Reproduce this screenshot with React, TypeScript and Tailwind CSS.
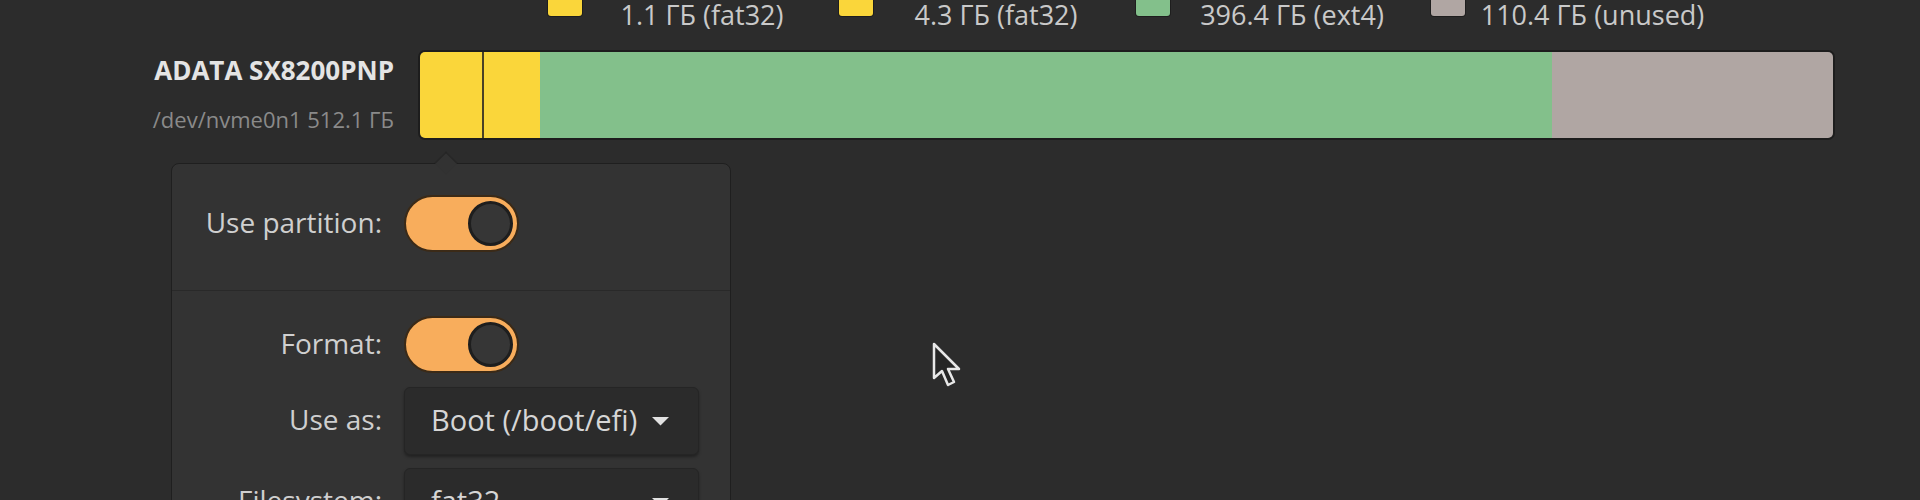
import React from "react";

type LegendItem = {
  color: string;
  size: string;
  width: string;
};

// the partition names sit above the top edge of the view; only the sizes show
const legend: LegendItem[] = [
  { color: "bg-[#fad63a]", size: "1.1 ГБ (fat32)", width: "w-[210px]" },
  { color: "bg-[#fad63a]", size: "4.3 ГБ (fat32)", width: "w-[216px]" },
  { color: "bg-[#83c08b]", size: "396.4 ГБ (ext4)", width: "w-[214px]" },
  { color: "bg-[#b0a6a3]", size: "110.4 ГБ (unused)", width: "w-[225px]" },
];

function Toggle() {
  return (
    <div className="flex h-[57px] w-[115px] items-center justify-end rounded-full border-2 border-[#3b2a17] bg-[#f8ad5c] pr-[4px]">
      <div className="h-[45px] w-[45px] rounded-full border-[3px] border-[#1e1e1e] bg-[#363636]" />
    </div>
  );
}

function Select({ value }: { value: string }) {
  return (
    <div className="flex h-[68px] w-[295px] items-center justify-between rounded-[6px] border border-[#252525] bg-[#2b2b2b] pl-[26px] pr-[28px] shadow-[0_2px_3px_rgba(0,0,0,0.35)]">
      <span className="whitespace-nowrap pb-[3px] text-[29px] leading-none text-[#d6d6d6]">{value}</span>
      <svg width="19" height="10" viewBox="0 0 19 10">
        <path d="M1 1 L18 1 L9.5 9.5 Z" fill="#e2e2e2" />
      </svg>
    </div>
  );
}

function Row({ label, children, className = "" }: { label: string; children: React.ReactNode; className?: string }) {
  return (
    <div className={`flex items-center pl-[31px] ${className}`}>
      <div className="w-[179px] whitespace-nowrap pb-[4px] text-right text-[28px] leading-none text-[#cfcfcf]">{label}</div>
      <div className="ml-[22px]">{children}</div>
    </div>
  );
}

function Cursor() {
  return (
    <svg
      className="absolute left-[932px] top-[342px]"
      width="30"
      height="46"
      viewBox="0 0 30 46"
    >
      <path
        d="M2 2 L2 36 L10 29 L16 43 L22 40 L16 27 L27 27 Z"
        fill="#262626"
        stroke="#e8e8e8"
        strokeWidth="2.5"
        strokeLinejoin="round"
      />
    </svg>
  );
}

export default function App() {
  return (
    <div className="relative h-[500px] w-full overflow-hidden bg-[#2c2c2c] font-['Open_Sans',sans-serif]">
      {/* legend, scrolled so the partition names sit above the top edge */}
      <div className="-mt-[31px] ml-[420px] mr-[87px] flex justify-center gap-x-8">
        {legend.map((item) => (
          <div key={item.size} className="flex items-center gap-[15px]">
            <div className={`h-[34px] w-[34px] rounded-[3px] shadow-[0_0_0_1px_#1e1e1e] ${item.color}`} />
            <div className={`${item.width} whitespace-nowrap text-center text-[27px] leading-[27px] text-[#c9c9c9]`}>
              <div className="h-[32px]" />
              <div>{item.size}</div>
            </div>
          </div>
        ))}
      </div>

      {/* disk */}
      <div className="mt-[24px] flex items-center pl-[140px] pr-[87px]">
        <div className="w-[254px] text-right">
          <div className="whitespace-nowrap text-[26px] font-bold leading-[32px] text-[#e4e4e4]">ADATA SX8200PNP</div>
          <div className="mt-[16px] whitespace-nowrap text-[22px] leading-[34px] text-[#8a8a8a]">/dev/nvme0n1 512.1 ГБ</div>
        </div>
        <div className="ml-[26px] flex h-[86px] flex-1 overflow-hidden rounded-[5px] shadow-[0_0_0_2px_#1d1d1d]">
          <div className="w-[62px] bg-[#fad63a]" />
          <div className="w-[58px] border-l-2 border-[#4a4125] bg-[#fad63a]" />
          <div className="flex-1 bg-[#83c08b]" />
          <div className="w-[281px] bg-[#b0a6a3]" />
        </div>
      </div>

      {/* partition popover */}
      <div className="relative ml-[171px] mt-[25px] w-[560px] rounded-t-[8px] border border-[#1f1f1f] bg-[#333333]">
        <div className="absolute -top-[9px] left-[266px] h-4 w-4 rotate-45 border-l border-t border-[#242424] bg-[#323232]" />
        <div className="pb-[38px] pt-[31px]">
          <Row label="Use partition:">
            <Toggle />
          </Row>
        </div>
        <div className="h-px bg-[#292929]" />
        <div className="flex flex-col pt-[25px]">
          <Row label="Format:">
            <Toggle />
          </Row>
          <Row label="Use as:" className="mt-[14px]">
            <Select value="Boot (/boot/efi)" />
          </Row>
          <Row label="Filesystem:" className="mt-[13px]">
            <Select value="fat32" />
          </Row>
        </div>
      </div>

      <Cursor />
    </div>
  );
}
